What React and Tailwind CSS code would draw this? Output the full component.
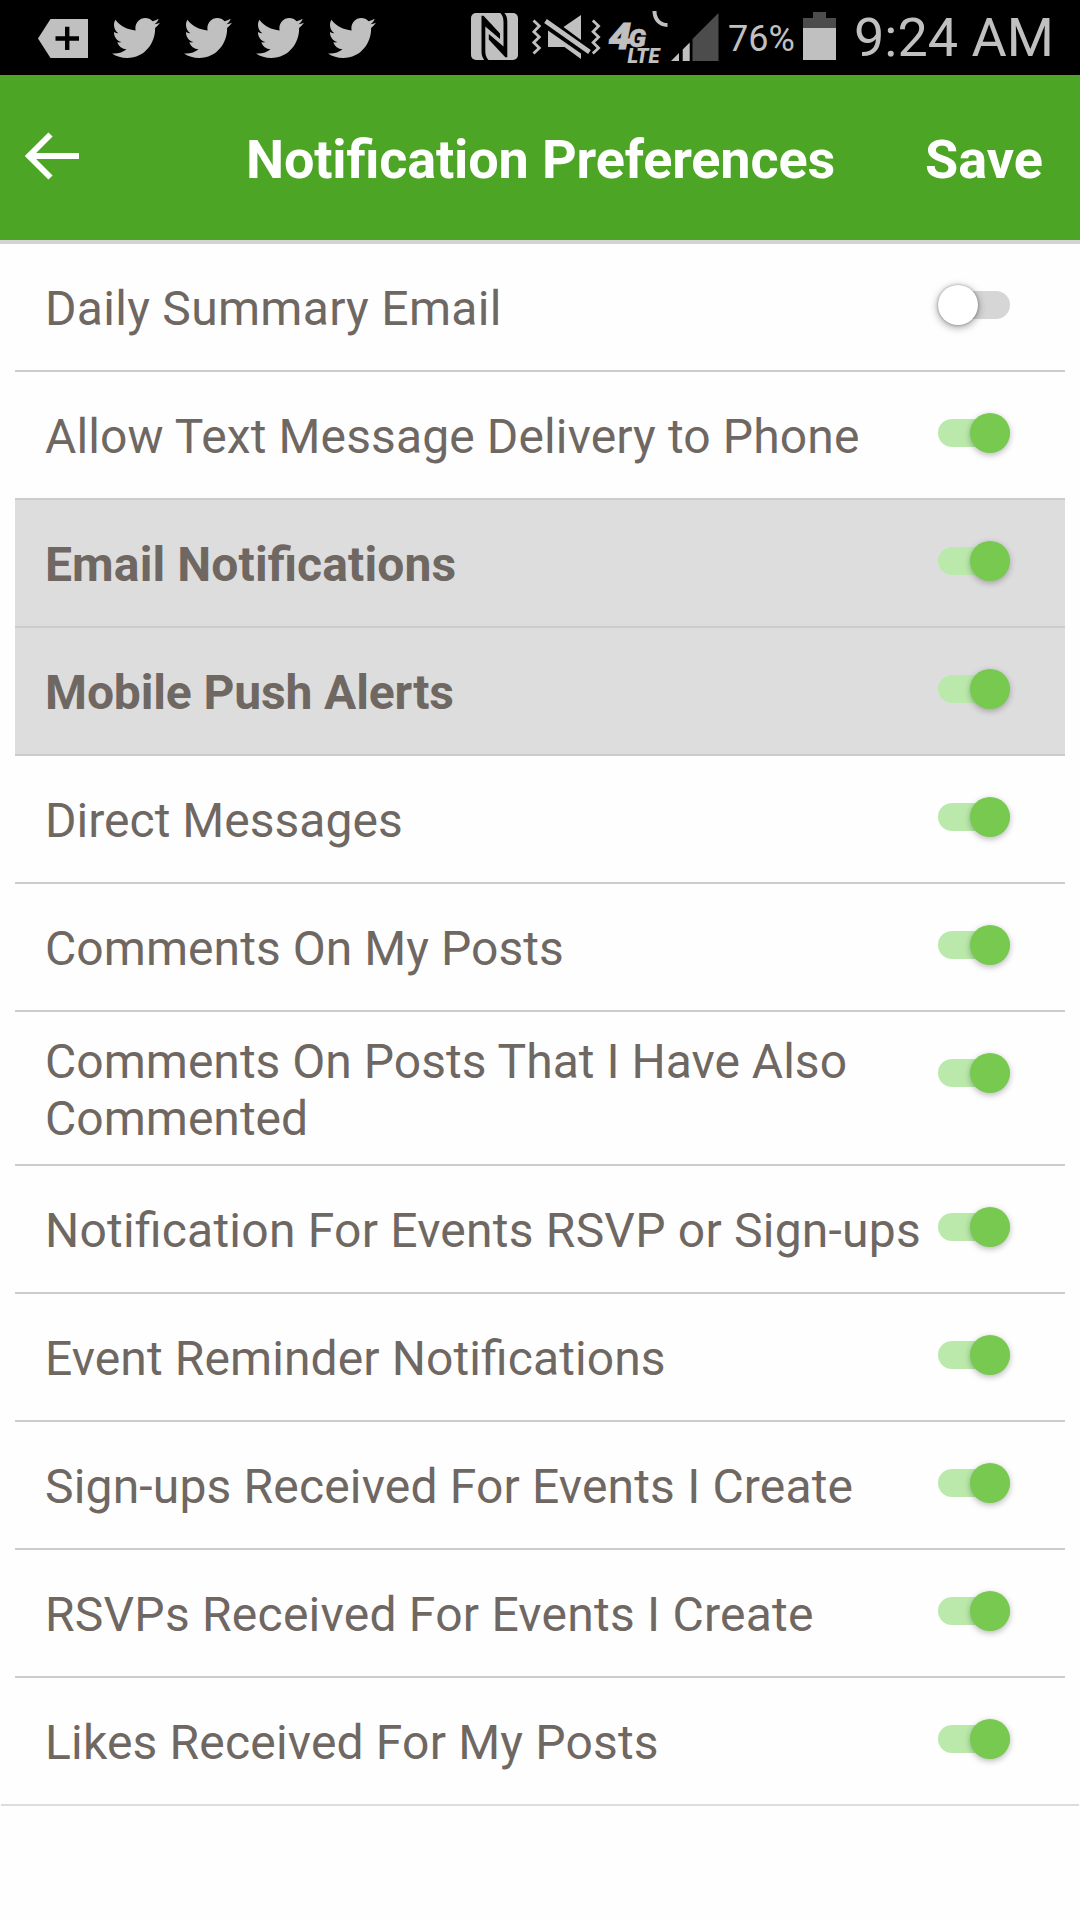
import { FaTwitter } from "react-icons/fa";

const settings = [
  { label: "Daily Summary Email", on: false, tracking: "tracking-[0.3px]" },
  { label: "Allow Text Message Delivery to Phone", on: true, tracking: "tracking-[0.12px]" },
  { label: "Email Notifications", on: true, heading: true, tracking: "tracking-[0.12px]" },
  { label: "Mobile Push Alerts", on: true, heading: true, tracking: "tracking-[-0.13px]" },
  { label: "Direct Messages", on: true, tracking: "tracking-[0.02px]" },
  { label: "Comments On My Posts", on: true, tracking: "tracking-[0.06px]" },
  { label: "Comments On Posts That I Have Also Commented", on: true, tracking: "tracking-[0.02px]" },
  { label: "Notification For Events RSVP or Sign-ups", on: true, tracking: "tracking-[0.23px]" },
  { label: "Event Reminder Notifications", on: true, tracking: "tracking-[0.1px]" },
  { label: "Sign-ups Received For Events I Create", on: true, tracking: "tracking-[0.17px]" },
  { label: "RSVPs Received For Events I Create", on: true, tracking: "tracking-[0.24px]" },
  { label: "Likes Received For My Posts", on: true, tracking: "tracking-[0.18px]" },
];

function AddTagIcon() {
  return (
    <svg className="h-[39px] w-[50px] shrink-0" viewBox="0 0 50 39">
      <path d="M0 19.5 12.5 0H50V39H12.5Z" fill="#c0c0c0" />
      <path d="M17.5 19.5H41M29.2 7.7V31" stroke="#000" strokeWidth="4.4" />
    </svg>
  );
}

function NfcIcon() {
  return (
    <svg className="h-[47px] w-[47px] shrink-0" viewBox="0 0 47 47">
      <rect width="47" height="47" rx="5" fill="#c0c0c0" />
      <path d="M10.500 2.700H12.500L29 20.500V26L14.300 13.500V38Q14.300 44 17.500 47H13.300Q10.500 44 10.500 38Z" fill="#000" />
      <path d="M36.300 44.200H34.300L17.800 26.400V20.900L32.500 33.400V9Q32.500 3 29.300 0H33.500Q36.300 3 36.300 9Z" fill="#000" />
    </svg>
  );
}

function VibrateMuteIcon() {
  return (
    <svg className="h-[46px] w-[69px] shrink-0" viewBox="0 0 69 46">
      <g fill="none" stroke="#c0c0c0" strokeWidth="2.8">
        <path d="M1.500 5.500 7.300 11 1.800 16.800 7.300 22 1.800 27.500 7.300 33 1.500 38.500" />
        <path d="M60.800 5.500 66.600 11 61.100 16.800 66.600 22 61.100 27.500 66.600 33 60.800 38.500" />
      </g>
      <g fill="#c0c0c0">
        <path d="M31.500 12 49 0V25Z" />
        <path d="M16 15.500 49 38.500V44L32.500 32H16Z" />
      </g>
      <path d="M13.500 6 57.500 37" stroke="#c0c0c0" strokeWidth="4.600" />
    </svg>
  );
}

function LteIcon() {
  return (
    <svg className="h-[60px] w-[60px] shrink-0 overflow-visible" viewBox="0 0 60 60">
      <g fill="#c0c0c0" stroke="#c0c0c0" fontFamily="Roboto, sans-serif" fontStyle="italic" fontWeight="900">
        <text x="0.500" y="38.500" fontSize="37" strokeWidth="0.8" textLength="23" lengthAdjust="spacingAndGlyphs">4</text>
        <text x="20.500" y="36.500" fontSize="26.500" strokeWidth="0.6">G</text>
        <text x="19.500" y="53" fontSize="21" strokeWidth="0" textLength="32" lengthAdjust="spacingAndGlyphs">LTE</text>
      </g>
      <path d="M46.500 1C46.500 9 51.500 15 59.500 15" fill="none" stroke="#c0c0c0" strokeWidth="4" />
    </svg>
  );
}

function SignalIcon() {
  return (
    <svg className="h-[48px] w-[48px] shrink-0" viewBox="0 0 48 48">
      <path d="M21.500 26 47.500 0V48H21.500Z" fill="#4c4c4c" />
      <path d="M0 48 8 40V48ZM11.700 48V36.500L18.700 29.500V48Z" fill="#c0c0c0" />
    </svg>
  );
}

function BatteryIcon() {
  return (
    <div className="flex h-12 w-[33px] shrink-0 flex-col items-center">
      <div className="h-1.5 w-[13px] bg-[#4c4c4c]" />
      <div className="h-2.5 w-full bg-[#4c4c4c]" />
      <div className="w-full flex-1 bg-[#c0c0c0]" />
    </div>
  );
}

function StatusBar() {
  return (
    <div className="flex h-[75px] items-start bg-black text-[#c0c0c0]">
      <div className="flex items-center gap-6 pt-[18px] pl-[38px]">
        <AddTagIcon />
        <FaTwitter className="h-[40px] w-[48px]" preserveAspectRatio="none" viewBox="0 48 512 416" />
        <FaTwitter className="h-[40px] w-[48px]" preserveAspectRatio="none" viewBox="0 48 512 416" />
        <FaTwitter className="h-[40px] w-[48px]" preserveAspectRatio="none" viewBox="0 48 512 416" />
        <FaTwitter className="h-[40px] w-[48px]" preserveAspectRatio="none" viewBox="0 48 512 416" />
      </div>
      <div className="ml-[95px] flex items-start">
        <div className="pt-[13px]"><NfcIcon /></div>
        <div className="ml-[14px] pt-[15px]"><VibrateMuteIcon /></div>
        <div className="ml-[7px] pt-2.5"><LteIcon /></div>
        <div className="ml-[3px] pt-[13px]"><SignalIcon /></div>
        <span className="ml-[9px] w-[75px] pt-[18px] text-[36px] leading-[42px]">76%</span>
        <div className="pt-3"><BatteryIcon /></div>
        <span className="ml-[18px] pt-[6px] text-[54px] leading-[64px] whitespace-nowrap">9:24 AM</span>
      </div>
    </div>
  );
}

function Header() {
  return (
    <header className="flex h-[169px] items-center border-b-4 border-[#d3d3d3] bg-[#4ca524] text-[54px] leading-[64px] font-bold text-white">
      <svg className="mb-[3px] ml-[25px] h-[48px] w-[54px] shrink-0" viewBox="0 0 54 48">
        <path d="M54 24H4M25.500 2.500 4 24 25.500 45.500" fill="none" stroke="#fff" strokeWidth="6" />
      </svg>
      <h1 className="ml-[167px] w-[679px] pt-[5px] tracking-[-0.16px] whitespace-nowrap [font-feature-settings:'liga'_1]">Notification Preferences</h1>
      <button className="pt-[5px] font-bold">Save</button>
    </header>
  );
}

function Toggle({ on }) {
  return (
    <div className="mt-[41px] flex h-10 w-[72px] shrink-0 items-center">
      <div className={`flex h-7 w-full items-center rounded-full ${on ? "justify-end bg-[#bbe9ab]" : "justify-start bg-[#d6d6d6]"}`}>
        <div
          className={`size-10 shrink-0 rounded-full ${
            on ? "bg-[#77c950] shadow-[0_2px_6px_rgba(0,0,0,0.28)]" : "bg-white shadow-[0_2px_9px_rgba(0,0,0,0.4),0_0_3px_rgba(0,0,0,0.3)]"
          }`}
        />
      </div>
    </div>
  );
}

function Row({ item, last }) {
  return (
    <li
      className={`flex items-start justify-between pr-[55px] pl-[30px] ${last ? "" : "border-b-2 border-[#cccccc]"} ${item.heading ? "bg-[#dddddd] font-bold" : ""}`}
    >
      <div className="flex min-h-[126px] items-center pt-[20.5px] pb-[17.5px]">
        <span className={`w-[892px] text-[48px] leading-[57px] text-[#6f6762] [font-feature-settings:'liga'_1] ${item.tracking}`}>{item.label}</span>
      </div>
      <Toggle on={item.on} />
    </li>
  );
}

export default function App() {
  return (
    <div className="min-h-[1920px] w-[1080px] bg-[#fefefe] font-['Roboto',sans-serif]">
      <StatusBar />
      <Header />
      <ul className="px-[15px]">
        {settings.map((item, i) => (
          <Row key={item.label} item={item} last={i === settings.length - 1} />
        ))}
      </ul>
      <div className="mx-px h-0.5 bg-[#dddddd]" />
    </div>
  );
}
